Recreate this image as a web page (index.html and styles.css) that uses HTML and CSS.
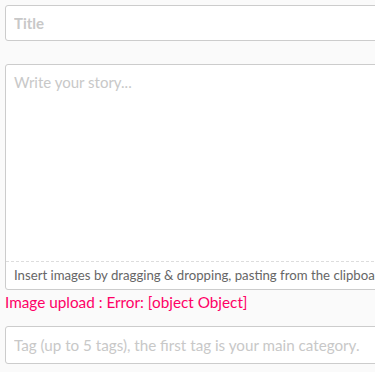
FILE: index.html
```html
<!DOCTYPE html>
<html lang="en">
<head>
    <meta charset="UTF-8">
    <meta name="viewport" content="width=device-width, initial-scale=1.0">
    <title>New Story</title>
    <link rel="stylesheet" href="styles.css">
</head>
<body>
    <form class="story-form">
        <input type="text" class="field title-field" placeholder="Title">

        <div class="editor">
            <textarea class="editor-text" placeholder="Write your story..."></textarea>
            <p class="editor-hint">Insert images by dragging &amp; dropping, pasting from the clipboard, or by selecting them.</p>
        </div>
        <p class="upload-error">Image upload : Error: [object Object]</p>

        <input type="text" class="field tag-field" placeholder="Tag (up to 5 tags), the first tag is your main category.">
    </form>
</body>
</html>
```

FILE: styles.css
```css
body {
    margin: 0;
    padding: 0;
    background-color: #fafafa;
    font-family: Lato, "Noto Sans", sans-serif;
    overflow: hidden;
}

.story-form {
    width: 420px;
    padding: 5px;
    display: flex;
    flex-direction: column;
}

.field {
    box-sizing: border-box;
    width: 100%;
    height: 36px;
    padding: 0 8px;
    border: 1px solid #ccc;
    border-radius: 3px;
    background: #fff;
    font-family: inherit;
    font-size: 15px;
    color: #333;
    outline: none;
}

.field::placeholder {
    color: #c8c8c8;
}

.title-field {
    font-weight: bold;
}

/* Editor with drop hint */
.editor {
    margin-top: 23px;
    border: 1px solid #ccc;
    border-radius: 3px;
    background: #fff;
}

.editor-text {
    display: block;
    box-sizing: border-box;
    width: 100%;
    height: 196px;
    padding: 8px 8px;
    border: none;
    resize: none;
    background: transparent;
    font-family: inherit;
    font-size: 15px;
    color: #333;
    outline: none;
}

.editor-text::placeholder {
    color: #c8c8c8;
}

.editor-hint {
    margin: 0;
    padding: 5px 8px 6px;
    border-top: 1px dashed #ddd;
    font-size: 13.2px;
    color: #666;
    white-space: nowrap;
    overflow: hidden;
}

.upload-error {
    margin: 3px 0 0;
    font-size: 15.3px;
    color: #ff0066;
}

.tag-field {
    margin-top: 15px;
    height: 38px;
    font-size: 15.2px;
}
```
